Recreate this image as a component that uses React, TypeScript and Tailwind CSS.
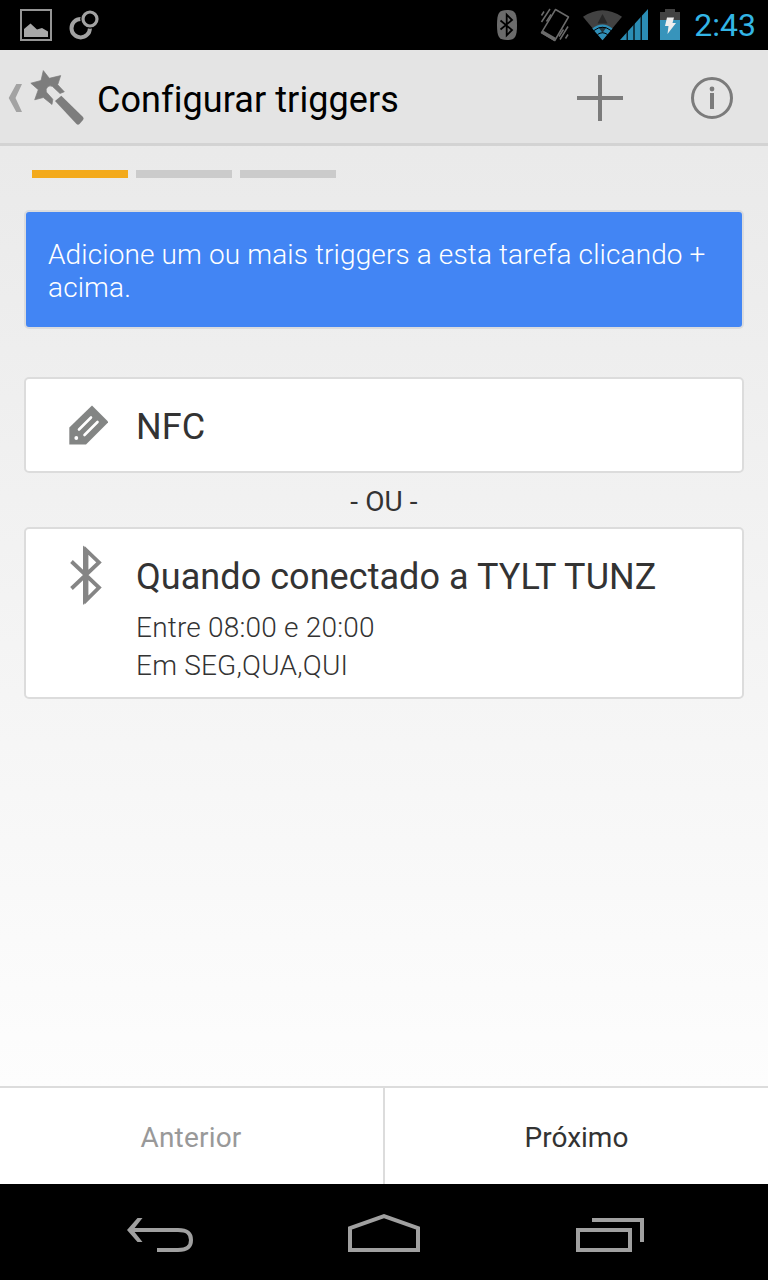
import type { ReactNode } from "react";
import clsx from "clsx";

interface IconProps {
  viewBox: string;
  className: string;
  children: ReactNode;
}

function Icon({ viewBox, className, children }: IconProps) {
  return (
    <svg viewBox={viewBox} className={clsx("block shrink-0", className)} fill="none">
      {children}
    </svg>
  );
}

const STEPS = [true, false, false];

function StatusBar() {
  return (
    <header className="flex h-[50px] items-center justify-between bg-black pr-3">
      <Icon viewBox="0 0 110 50" className="h-[50px] w-[110px]">
        <rect x="21" y="10" width="30" height="30" stroke="#959595" strokeWidth="2" />
        <path d="M24 37V29l6.500-5.500 6.500 6 5-1.500 6 3.500V37z" fill="#a8a8a8" />
        <circle cx="80.700" cy="28.200" r="9.200" stroke="#a2a2a2" strokeWidth="4" />
        <circle cx="90" cy="19" r="9.800" fill="#000" />
        <circle cx="90" cy="19" r="7" stroke="#a2a2a2" strokeWidth="3.200" />
      </Icon>
      <div className="flex items-center">
        <Icon viewBox="490 0 196 50" className="h-[50px] w-[196px]">
          <path d="M507 10c8 0 10 3 10 15s-2 15-10 15-10-3-10-15 2-15 10-15z" fill="#6b6b6b" />
          <path d="M500.500 20.500l11.500 9.500-5.300 5.300V14.700L512 20l-11.500 9.500" stroke="#000" strokeWidth="1.800" />
          <path d="M555.500 9.500l13 7.500-13.700 23.500-13.300-7.800z" stroke="#6b6b6b" strokeWidth="1.500" strokeLinejoin="round" />
          <path d="M541.800 31.800l13 7.500" stroke="#6b6b6b" strokeWidth="3.600" />
          <path d="M541.500 15.500l2.500-4M541.500 22l8.500-13M546.500 21.500l4.500-7M559 36.500l4.500-7M560 39.500l8-13M565.500 38.500l2.500-4" stroke="#6b6b6b" strokeWidth="1.500" />
          <path d="M583 16.700q19.500-13 39 0L602.500 40.300z" fill="#424242" />
          <path d="M592.300 28.500q10-8 20.200 0L602.500 40.300z" fill="#2f8fb8" />
          <path d="M602.500 14l5 9.500h-10zM602.500 33l-4-6h8z" fill="#222" fillOpacity="0.800" />
          <path d="M594 30.500q8.500-6.500 17 0M597.500 34.500q5-3.500 10 0" stroke="#000" strokeWidth="1" />
          <path d="M648 9v31h-28z" fill="#2b8db5" />
          <path d="M627.200 28v12M634 20v20M641.200 12v28" stroke="#000" strokeWidth="1.200" />
          <path d="M660 12h5V9h10v3h5v8h-20z" fill="#424242" />
          <path d="M660 20h20v20h-20z" fill="#3794bb" />
          <path d="M667 17.500h7l-1.500 5.500h3.500l-8.500 11 1-8h-3.500z" fill="#eee" />
        </Icon>
        <span className="ml-2 text-[32px] leading-[50px] text-[#33b5e5]">2:43</span>
      </div>
    </header>
  );
}

function ActionBar() {
  return (
    <div className="flex h-24 items-center border-b-[3px] border-[#d3d3d3] bg-[#e4e4e4]">
      <Icon viewBox="0 50 97 93" className="h-[93px] w-[97px]">
        <path d="M16.300 84H22l-6.500 14 6.500 14h-5.700L8.700 98z" fill="#a3a3a3" />
        <path
          d="M43.300 70.600L49.300 78.300 60.700 75.600 57.700 84.700 64.300 91.800 60 93.500 52.500 86.500Q50 85 47.500 87 45.300 89.300 46.300 92L52.800 99.300 52 104.500 43.300 97.500 34.700 99.800 38.300 89.700 30.800 83.200 41 80.500z"
          fill="#7d7d7d"
          stroke="#7d7d7d"
          strokeWidth="0.700"
        />
        <path d="M55 101l6.300-5.300 21.700 21.300q1.300 1.500 0 3l-3.500 4q-1.500 1.500-3 0z" fill="#7d7d7d" />
      </Icon>
      <h1 className="grow pt-1.5 text-4xl font-normal tracking-[0.080px] text-black">Configurar triggers</h1>
      <button className="flex w-28 justify-center pt-0.5">
        <Icon viewBox="0 0 46 46" className="size-[46px]">
          <path d="M0 23h46M23 0v46" stroke="#7b7b7b" strokeWidth="4" />
        </Icon>
      </button>
      <button className="flex w-28 justify-center pt-0.5">
        <Icon viewBox="0 0 44 44" className="size-11">
          <circle cx="22" cy="22" r="19.500" stroke="#7b7b7b" strokeWidth="3" />
          <circle cx="22" cy="13" r="2.400" fill="#7b7b7b" />
          <path d="M22 17v16" stroke="#7b7b7b" strokeWidth="4" />
        </Icon>
      </button>
    </div>
  );
}

function TriggerCard({ icon, title, details = [] }: { icon: ReactNode; title: string; details?: string[] }) {
  return (
    <div className="flex rounded-[5px] border-2 border-[#dcdcdc] bg-white pl-10">
      <div className="flex h-[92px] w-[70px] items-center">{icon}</div>
      <div>
        <h2 className="pt-1 text-4xl leading-[88px] font-normal tracking-[0.05px] text-[#333]">{title}</h2>
        {details.length > 0 && (
          <div className="-mt-3 h-[88px] text-[28px] leading-[38px] font-light tracking-[0.200px] text-[#333]">
            {details.map((line) => (
              <p key={line}>{line}</p>
            ))}
          </div>
        )}
      </div>
    </div>
  );
}

function NavBar() {
  return (
    <nav className="flex h-24 bg-black text-[#a0a0a0]">
      <button className="flex w-64 justify-end pt-0.5 pr-[62px]">
        <Icon viewBox="126 1186 68 94" className="h-[94px] w-[68px]">
          <path d="M130 1230h48c9 0 13 3 13 10s-4 10-13 10h-21" stroke="currentColor" strokeWidth="4" />
          <path d="M137.500 1218h5l-9.500 12 9.500 12h-5l-10.500-12z" fill="currentColor" />
        </Icon>
      </button>
      <button className="flex w-64 justify-center pt-[30px]">
        <Icon viewBox="0 0 72 38" className="h-[38px] w-[72px]">
          <path d="M2 36V14.200L36 2.200l34 12V36z" stroke="currentColor" strokeWidth="4" />
        </Icon>
      </button>
      <button className="flex w-64 pt-[34px] pl-16">
        <Icon viewBox="0 0 68 34" className="h-[34px] w-[68px]">
          <path d="M2 12h52v20H2zM16 2h50v22" stroke="currentColor" strokeWidth="4" />
        </Icon>
      </button>
    </nav>
  );
}

export default function App() {
  return (
    <div className="flex h-[1280px] w-[768px] flex-col overflow-hidden bg-black font-['Roboto',sans-serif]">
      <StatusBar />
      <div className="flex grow flex-col bg-linear-to-b from-[#e8e8e8] to-white">
        <ActionBar />
        <div className="flex gap-2 px-8 pt-6">
          {STEPS.map((active, i) => (
            <div key={i} className={clsx("h-2 w-24", active ? "bg-[#f3aa1c]" : "bg-[#cbcbcb]")} />
          ))}
        </div>
        <main className="flex grow flex-col px-6 pt-8">
          <p className="h-[119px] rounded-[5px] border-2 border-[#dbdcde] bg-[#4285f4] px-[22px] pt-[26px] text-[28px] leading-[33px] font-light tracking-[0.120px] text-white">
            Adicione um ou mais triggers a esta tarefa clicando + acima.
          </p>
          <div className="mt-12">
            <TriggerCard
              title="NFC"
              icon={
                <Icon viewBox="69 405 39 40" className="ml-[3px] h-10 w-[39px]">
                  <path d="M69.300 427.500L92 405.500l16.500 16.500L86 444.500H69.300z" fill="#838584" />
                  <path d="M79 429.500l12-12M84.500 435l13-13" stroke="#fff" strokeWidth="2.600" strokeLinecap="round" />
                  <circle cx="76.300" cy="438" r="1.900" fill="#fff" />
                </Icon>
              }
            />
            <p className="h-[54px] pt-0.5 text-center text-[28px] leading-[54px] tracking-[0.100px] text-[#333]">- OU -</p>
            <TriggerCard
              title="Quando conectado a TYLT TUNZ"
              details={["Entre 08:00 e 20:00", "Em SEG,QUA,QUI"]}
              icon={
                <Icon viewBox="70 545 32 60" className="ml-1 h-[60px] w-8">
                  <path d="M71.500 561.500l27.500 26-12.500 12.500V550.500L99 562.500l-27.500 26" stroke="#858585" strokeWidth="3.800" />
                  <path d="M83 545.500l4.500 4.500v50.500L83 605z" fill="#858585" />
                </Icon>
              }
            />
          </div>
        </main>
        <footer className="flex h-[98px] border-t-2 border-[#dcdcdc] bg-white text-[28px] leading-[100px]">
          <button className="w-[385px] border-r-2 border-[#dcdcdc] pr-px tracking-[0.200px] text-[#999]">Anterior</button>
          <button className="grow text-[#333]">Próximo</button>
        </footer>
      </div>
      <NavBar />
    </div>
  );
}
